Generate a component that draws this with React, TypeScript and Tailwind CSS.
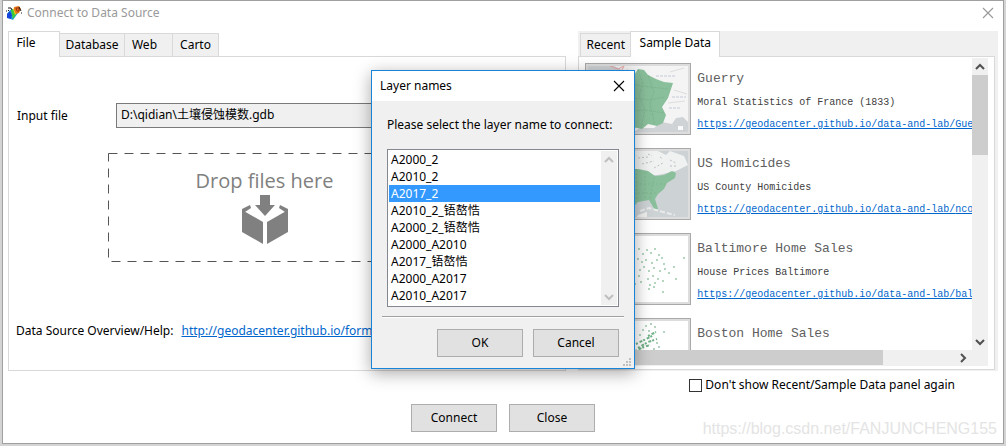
import { useState } from "react";
import type { ReactNode } from "react";

const layers = [
  "A2000_2",
  "A2010_2",
  "A2017_2",
  "A2010_2_铻嶅悎",
  "A2000_2_铻嶅悎",
  "A2000_A2010",
  "A2017_铻嶅悎",
  "A2000_A2017",
  "A2010_A2017",
];

const FranceMap = () => (
  <svg viewBox="0 0 100 66" className="block h-full w-full">
    <rect width="100" height="66" fill="#f4f4f4" />
    <path d="M0 0H26L38 6L44 8L30 20L20 40L24 66H0Z" fill="#cfd3d6" />
    <path d="M22 0L30 3L36 0L33 6L40 4" stroke="#e8a5a5" fill="none" />
    <path d="M86 66L84 58L88 52L95 51L100 56V66Z" fill="#cfd3d6" />
    <path d="M46 66L52 62L66 62L74 56L84 58L87 66Z" fill="#cfd3d6" />
    <path d="M50 3L56 4L60 9L68 13L76 16L85 17L80 32L74 41L78 49L75 57L69 60L60 58L54 63L34 59L36 44L24 28L12 22L26 19L34 10L46 9Z" fill="#8abf9b" />
    <path d="M50 4L55 18L51 30L57 44L53 62M60 9L66 26L62 38L67 59M34 16L54 20L80 23M34 31L62 34L76 31M37 46L57 44L76 47" stroke="#7fb590" strokeWidth="1" strokeDasharray="3 1" fill="none" />
    <path d="M68 10H88M84 31H98M81 42H93" stroke="#c5cad8" strokeDasharray="3 1" />
    <path d="M82 6L96 2M86 24L99 28M80 37L97 35" stroke="#dddddd" fill="none" />
    <path d="M90 60H95V64H90Z" fill="#fafafa" />
  </svg>
);

const UsMap = () => (
  <svg viewBox="0 0 100 66" className="block h-full w-full">
    <rect width="100" height="66" fill="#cdd2d5" />
    <path d="M0 0H70L78 4L82 0L96 5L100 14L88 20L70 24H0Z" fill="#f0f1f1" />
    <path d="M2 18L50 18L60 20L67 25L76 24L84 20L88 22L87 27L79 32L76 38L70 43L67 48L70 58L67 59L61 49L50 51L44 57L34 49L14 45L4 32Z" fill="#8abf9b" />
    <path d="M0 48L32 51L42 58L45 65H0Z" fill="#eff0f0" />
    <path d="M48 18L49 50M57 21L57 48M66 26L62 49M20 33L77 33M22 42L70 42" stroke="#7fb590" strokeDasharray="2 2" fill="none" />
    <path d="M50 7L60 6M54 13L66 10M66 17L75 12M72 6L75 8M82 9L88 12M60 3L64 5M45 3L49 5M82 15L90 15" stroke="#bac0c4" strokeDasharray="2 2" fill="none" />
    <path d="M52 60L61 57L75 61L87 64" stroke="#e9eaea" strokeWidth="2" strokeDasharray="5 2" fill="none" />
    <path d="M50 64L59 61V66H49Z" fill="#eff0ee" />
  </svg>
);

const dots = [
  [50, 13], [54, 18], [58, 14], [62, 17], [66, 13], [70, 19], [73, 22], [49, 23],
  [53, 26], [57, 24], [63, 27], [68, 24], [75, 28], [51, 34], [55, 31], [60, 35],
  [65, 32], [71, 35], [76, 33], [85, 31], [95, 22], [50, 40], [59, 43], [64, 40],
  [69, 43], [74, 45], [80, 37], [87, 43], [52, 46], [61, 49], [66, 47], [60, 53],
  [65, 51], [74, 56], [42, 17], [38, 27], [44, 33], [35, 39], [46, 48], [30, 20],
];

const DotMap = () => (
  <svg viewBox="0 0 100 66" className="block h-full w-full">
    <rect width="100" height="66" fill="#ffffff" />
    {dots.map(([x, y]) => (
      <path key={`${x}-${y}`} d={`M${x} ${y}h2`} stroke="#9bc8aa" strokeWidth="1.4" />
    ))}
  </svg>
);

const BostonMap = () => (
  <svg viewBox="0 0 100 66" className="block h-full w-full">
    <rect width="100" height="66" fill="#ffffff" />
    <path
      d="M48 23L58 18L66 14M50 27L60 21L69 18M47 30L56 26L62 24M60 15L68 11"
      stroke="#6fb186"
      strokeWidth="2"
      strokeDasharray="2 2 3 1"
      fill="none"
    />
    <path
      d="M57 5h2M62 3h2M66 6h2M54 9h2M60 10h2M51 14h2M68 22h2M75 11h2M70 26h2M65 28h2"
      stroke="#9bc8aa"
      strokeWidth="1.4"
    />
  </svg>
);

const samples = [
  { title: "Guerry", text: "Moral Statistics of France (1833)", page: "Guerry", map: <FranceMap /> },
  { title: "US Homicides", text: "US County Homicides", page: "ncovr", map: <UsMap /> },
  { title: "Baltimore Home Sales", text: "House Prices Baltimore", page: "baltim", map: <DotMap /> },
  { title: "Boston Home Sales", map: <BostonMap /> },
];

const AppLogo = () => (
  <svg viewBox="0 0 16 16" className="h-4 w-4">
    <path d="M1 9L4 5L9 4L12 8L7 15L2 13Z" fill="#20a6df" />
    <path d="M1 9L4 6L6 10L5 14L1 13Z" fill="#1546dc" />
    <path d="M5 5L8 4L11 8L7 14L6 10Z" fill="#3ec936" />
    <path d="M7 4L10 2L12 7L9 10Z" fill="#f3d21d" />
    <path d="M8 2L13 1L15 4L13 8L10 9L8 5Z" fill="#e5761b" />
    <path d="M10 3H13V6H11Z" stroke="#9b3511" fill="none" />
    <path d="M0 6H1M2 3H5L6 5M13 2L15 6M15 8H16M2 6L3 5" stroke="#181818" fill="none" />
  </svg>
);

const CloseIcon = () => (
  <svg viewBox="0 0 12 12" className="h-3 w-3">
    <path d="M1 1L11 11M11 1L1 11" stroke="currentColor" strokeWidth="1.1" />
  </svg>
);

const Arrow = ({ d }: { d: string }) => (
  <svg viewBox="0 0 10 10" className="h-[10px] w-[10px]">
    <path d={d} stroke="currentColor" strokeWidth="2" fill="none" />
  </svg>
);

const UP = "M1 7L5 3L9 7";
const DOWN = "M1 3L5 7L9 3";
const RIGHT = "M3 1L7 5L3 9";

const PushButton = ({ children }: { children: ReactNode }) => (
  <button className="h-7 w-[86px] border border-[#adadad] bg-[#e1e1e1]">
    {children}
  </button>
);

const DropZone = () => (
  <div className="relative mt-[25px] ml-[99px] h-[109px] w-[313px]">
    <svg className="absolute inset-0 h-full w-full">
      <rect x="0.5" y="0.5" width="312" height="108" fill="none" stroke="#555555" strokeDasharray="9 7" />
    </svg>
    <div className="flex flex-col items-center pt-[14px] text-[#808080]">
      <span className="font-['Open_Sans',sans-serif] text-[20px] leading-7">
        Drop files here
      </span>
      <svg viewBox="0 0 48 50" className="h-[50px] w-12" fill="currentColor">
        <path d="M19 0H29V10H34L24 21L14 10H19Z" />
        <path d="M1 15L22 27V49L1 37Z" />
        <path d="M47 15L26 27V49L47 37Z" />
        <path d="M1 17V14L9 10L10 13L4 17ZM47 17V14L39 10L38 13L44 17Z" />
      </svg>
    </div>
  </div>
);

const SourcePanel = () => (
  <section className="flex min-w-0 flex-[560] flex-col">
    <div className="flex items-end">
      <button className="z-10 -mb-px h-[26px] w-[52px] border border-b-0 border-[#d9d9d9] bg-white pr-4 pb-1">
        File
      </button>
      <button className="h-[23px] w-[65px] border-t border-r border-[#d9d9d9] bg-[#f0f0f0]">Database</button>
      <button className="h-[23px] w-12 border-t border-r border-[#d9d9d9] bg-[#f0f0f0] pr-2">Web</button>
      <button className="h-[23px] w-[46px] border-t border-r border-[#d9d9d9] bg-[#f0f0f0]">Carto</button>
    </div>
    <div className="flex-1 border border-[#d9d9d9]">
      <div className="flex items-center pt-[46px] pr-[60px] pl-2">
        <label htmlFor="input-file" className="w-[99px]">Input file</label>
        <input
          id="input-file"
          readOnly
          defaultValue="D:\qidian\土壤侵蚀模数.gdb"
          className="h-[25px] min-w-0 flex-1 border border-[#7a7a7a] bg-[#f0f0f0] px-1 pb-1"
        />
      </div>
      <DropZone />
      <p className="mt-[59px] flex gap-2 pl-[7px] leading-5 whitespace-nowrap">
        Data Source Overview/Help:
        <a href="#help" className="text-[#0066cc] underline">
          http://geodacenter.github.io/formats.html
        </a>
      </p>
    </div>
  </section>
);

const SamplePanel = () => (
  <section className="flex min-w-0 flex-[418] flex-col bg-[#f0f0f0] pr-[3px] pb-px">
    <div className="flex items-end pl-[2px]">
      <button className="h-[23px] w-[50px] border border-r-0 border-b-0 border-[#d9d9d9]">Recent</button>
      <button className="z-10 -mb-px h-[26px] w-[90px] border border-b-0 border-[#d9d9d9] bg-white pb-1">
        Sample Data
      </button>
    </div>
    <div className="flex flex-1 flex-col border border-[#d9d9d9] bg-white pt-px pr-[6px] pb-[3px] pl-[6px]">
      <div className="flex">
        <ul className="h-[292px] min-w-0 flex-1 overflow-hidden pt-[5px] font-['Liberation_Mono',monospace] whitespace-nowrap">
          {samples.map((item) => (
            <li key={item.title} className="flex h-[85px] gap-[6px]">
              <div className="h-[72px] w-[106px] shrink-0 border border-[#a9a9a9] bg-[#dddddd] p-[2px]">
                {item.map}
              </div>
              <div className="pt-[5px]">
                <h3 className="text-[13px] leading-[22px] text-[#606060]">{item.title}</h3>
                {item.page && (
                  <>
                    <p className="text-[10px] leading-[25px] text-[#404040]">{item.text}</p>
                    <a href={`#${item.page}`} className="block text-[10px] leading-5 text-[#0066cc] underline">
                      https://geodacenter.github.io/data-and-lab/{item.page}/
                    </a>
                  </>
                )}
              </div>
            </li>
          ))}
        </ul>
        <div className="flex w-4 flex-col items-center bg-[#f0f0f0] text-[#505050]">
          <button aria-label="Scroll up" className="flex h-[17px] items-center"><Arrow d={UP} /></button>
          <div className="h-20 w-full bg-[#cdcdcd]" />
          <button aria-label="Scroll down" className="mt-auto flex h-[17px] items-center"><Arrow d={DOWN} /></button>
        </div>
      </div>
      <div className="flex h-4 bg-[#f0f0f0] text-[#505050]">
        <div className="h-[15px] w-[74%] bg-[#cdcdcd]" />
        <button aria-label="Scroll right" className="mr-5 ml-auto"><Arrow d={RIGHT} /></button>
      </div>
    </div>
  </section>
);

const LayerDialog = () => {
  const [selected, setSelected] = useState("A2017_2");

  return (
    <div
      role="dialog"
      aria-label="Layer names"
      className="absolute top-[69px] left-1/2 z-20 w-[264px] -translate-x-1/2 border border-[#1883d7] bg-[#f0f0f0] shadow-[0_4px_16px_rgba(0,0,0,0.35)]"
    >
      <div className="flex h-[30px] items-center justify-between bg-white pr-[9px] pl-2">
        <h2>Layer names</h2>
        <button aria-label="Close dialog"><CloseIcon /></button>
      </div>
      <div className="px-[15px] pt-[14px]">
        <p className="leading-5 whitespace-nowrap">Please select the layer name to connect:</p>
        <div className="mt-[14px] flex border border-[#828790] bg-white p-px">
          <ul role="listbox" aria-label="Layers" className="flex-1 pb-px">
            {layers.map((name) => (
              <li
                key={name}
                role="option"
                aria-selected={name === selected}
                onClick={() => setSelected(name)}
                className={`h-[17px] pl-[2px] leading-[17px] ${name === selected ? "bg-[#3399ff] text-white" : ""}`}
              >
                {name}
              </li>
            ))}
          </ul>
          <div className="ml-px flex w-4 flex-col items-center justify-between bg-[#f0f0f0] text-[#bfbfbf]">
            <button aria-label="Scroll up" className="flex h-[17px] items-center"><Arrow d={UP} /></button>
            <button aria-label="Scroll down" className="flex h-[17px] items-center"><Arrow d={DOWN} /></button>
          </div>
        </div>
      </div>
      <div className="mx-[10px] mt-[9px] h-[2px] border-t border-[#a0a0a0] bg-white" />
      <div className="flex justify-end gap-[10px] px-[15px] pt-[11px] pb-[11px]">
        <PushButton>OK</PushButton>
        <PushButton>Cancel</PushButton>
      </div>
      <svg viewBox="0 0 8 8" className="absolute right-[3px] bottom-[2px] h-2 w-2" fill="#bfbfbf">
        <path d="M6 0h2v2h-2zM3 3h2v2h-2zM6 3h2v2h-2zM0 6h2v2h-2zM3 6h2v2h-2zM6 6h2v2h-2z" />
      </svg>
    </div>
  );
};

const App = () => (
  <div className="min-h-screen bg-[#d4d4d4] pr-[2px] pb-[2px] pl-[2px] font-['Noto_Sans','Noto_Sans_CJK_SC',sans-serif] text-[12px] text-black">
    <main className="relative border border-[#a0a0a0] bg-white">
      <header className="flex h-[30px] items-center justify-between pr-[9px] pb-[6px] pl-[3px]">
        <div className="flex items-center gap-[5px]">
          <AppLogo />
          <h1 className="text-[#999999]">Connect to Data Source</h1>
        </div>
        <button aria-label="Close window" className="text-[#999999]"><CloseIcon /></button>
      </header>
      <div className="flex gap-3 pr-[5px] pl-[5px]">
        <SourcePanel />
        <SamplePanel />
      </div>
      <label className="flex items-center justify-end gap-[3px] pt-[4px] pr-12 leading-5">
        <input type="checkbox" className="h-[13px] w-[13px] appearance-none border border-[#333333] bg-white" />
        Don't show Recent/Sample Data panel again
      </label>
      <div className="flex justify-center gap-3 pt-[9px] pb-[11px]">
        <PushButton>Connect</PushButton>
        <PushButton>Close</PushButton>
      </div>
      <span className="absolute right-[6px] bottom-[4px] font-['Liberation_Sans',sans-serif] text-[16px] leading-5 text-[#e4e4e4]">
        https://blog.csdn.net/FANJUNCHENG155
      </span>
      <LayerDialog />
    </main>
  </div>
);

export default App;
